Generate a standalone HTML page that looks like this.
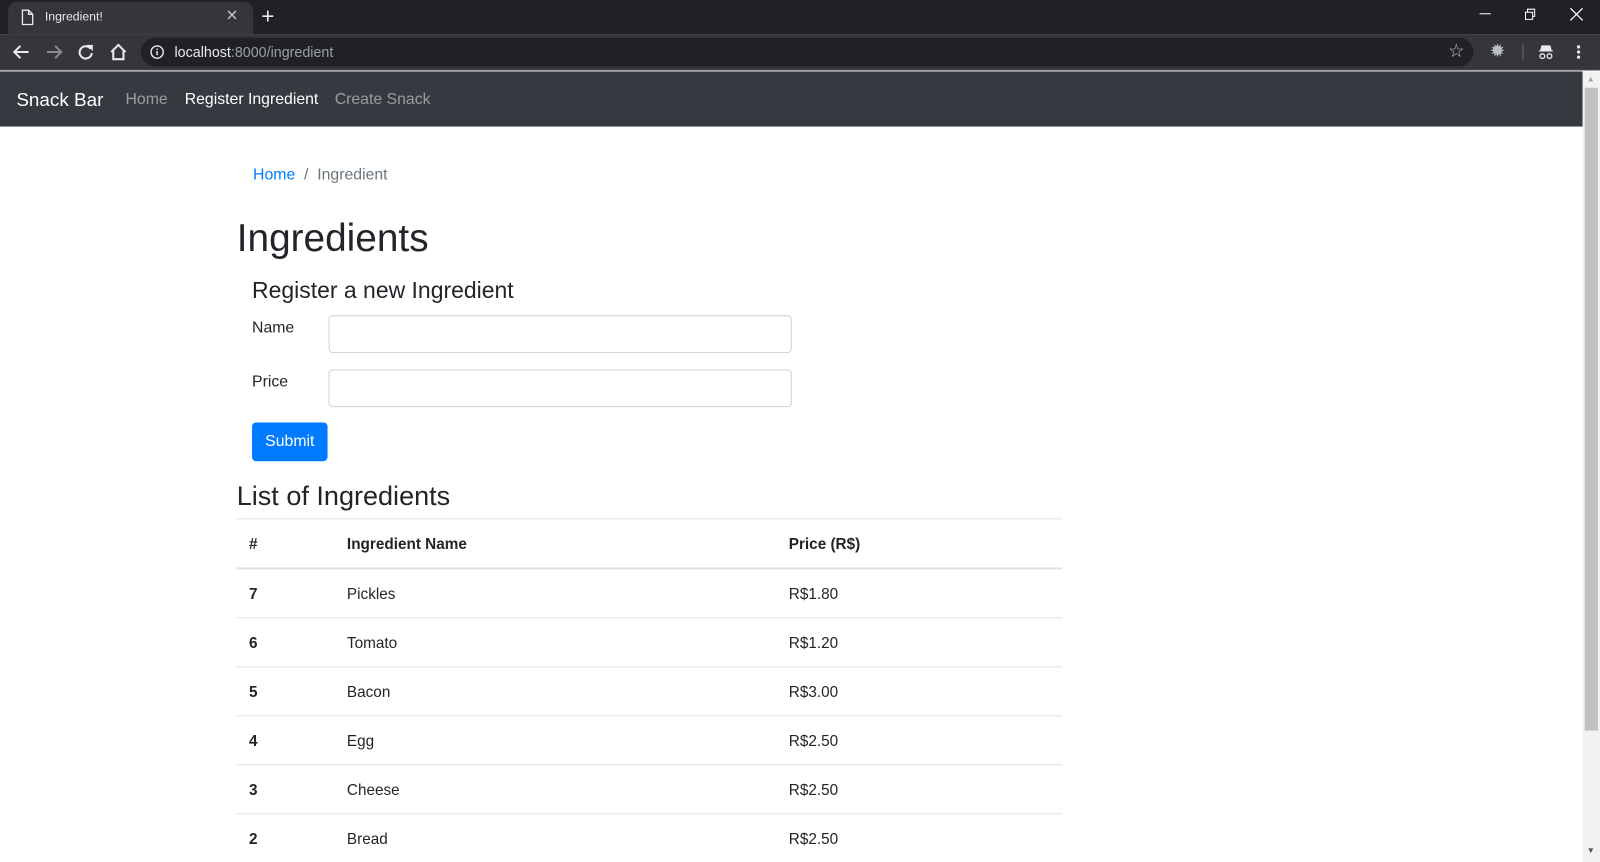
<!DOCTYPE html>
<html><head><meta charset="utf-8"><style>
*{box-sizing:border-box;margin:0;padding:0}
body{width:1600px;height:860px;overflow:hidden;background:#fff;font-family:"Liberation Sans",sans-serif;color:#212529;position:relative}
#w{position:absolute;left:0;top:0;width:1568px;height:843px;transform:scale(1.0204);transform-origin:0 0}
.a{position:absolute;white-space:nowrap}
.tabbar{left:0;top:0;width:1568px;height:34px;background:#202124}
.tab{left:8px;top:2px;width:240px;height:32px;background:#35363a;border-radius:8px 8px 0 0}
.tool{left:0;top:34px;width:1568px;height:35px;background:#35363a;border-bottom:1px solid #4a4b4f}
.url{left:138px;top:37px;width:1306px;height:28px;background:#202124;border-radius:14px}
.nav{left:0;top:70px;width:1551px;height:54px;background:#343a40}
.sb{left:1551px;top:70px;width:17px;height:775px;background:#f1f1f1}
.thumb{left:1553px;top:86px;width:13px;height:630px;background:#c1c1c1}
input{position:absolute;border:1px solid #ced4da;border-radius:4px;background:#fff}
.hr{position:absolute;left:232px;width:809px;height:1px;background:#dee2e6}
.c{font-size:15px}
</style></head><body><div id="w">
<div class="a tabbar"></div>
<div class="a tab"></div>
<svg class="a" style="left:20px;top:9px" width="14" height="16" viewBox="0 0 14 16"><path d="M2 1h6l4 4v10H2z M8 1v4h4" fill="none" stroke="#e8eaed" stroke-width="1.3"/></svg>
<div class="a" style="left:44px;top:9px;color:#e8eaed;font-size:12px">Ingredient!</div>
<div class="a" style="left:221px;top:6px;color:#bdc1c6;font-size:15px">✕</div>
<div class="a" style="left:256px;top:3px;color:#e8eaed;font-size:22px">+</div>
<div class="a" style="left:1450px;top:13px;width:11px;height:1px;background:#fff"></div>
<svg class="a" style="left:1494px;top:8px" width="12" height="12"><path d="M1 4h7v7H1z M3 4V1h7v7H8" fill="none" stroke="#fff"/></svg>
<svg class="a" style="left:1538px;top:7px" width="14" height="14"><path d="M1 1l12 12M13 1L1 13" stroke="#fff" stroke-width="1.2"/></svg>
<div class="a tool"></div>
<svg class="a" style="left:12px;top:43px" width="18" height="16"><path d="M16 8H3M8 2L2 8l6 6" fill="none" stroke="#e8eaed" stroke-width="2"/></svg>
<svg class="a" style="left:44px;top:43px" width="18" height="16"><path d="M2 8h13M10 2l6 6-6 6" fill="none" stroke="#8a8c90" stroke-width="2"/></svg>
<svg class="a" style="left:76px;top:43px" width="16" height="16"><path d="M13 5A6 6 0 1 0 14 9" fill="none" stroke="#e8eaed" stroke-width="2"/><path d="M9 1h6v6z" fill="#e8eaed"/></svg>
<svg class="a" style="left:107px;top:42px" width="18" height="18"><path d="M2 9L9 2l7 7M4 8v8h10V8" fill="none" stroke="#e8eaed" stroke-width="2"/></svg>
<div class="a url"></div>
<svg class="a" style="left:147px;top:44px" width="14" height="14"><circle cx="7" cy="7" r="6" fill="none" stroke="#e8eaed" stroke-width="1.4"/><path d="M7 6v4M7 3.5v1.2" stroke="#e8eaed" stroke-width="1.5"/></svg>
<div class="a" style="left:171px;top:43px;font-size:14px;color:#e8eaed">localhost<span style="color:#9aa0a6">:8000/ingredient</span></div>
<div class="a" style="left:1419px;top:40px;color:#bdc1c6;font-size:18px">☆</div>
<div class="a" style="left:1460px;top:40px;color:#bdc1c6;font-size:18px">✹</div>
<div class="a" style="left:1492px;top:43px;width:1px;height:16px;background:#6b6c70"></div>
<svg class="a" style="left:1507px;top:43px" width="16" height="16"><path d="M4 2h8l1 4H3z M1 7h14" stroke="#e8eaed" fill="#e8eaed"/><circle cx="4.5" cy="12" r="2.3" fill="none" stroke="#e8eaed" stroke-width="1.3"/><circle cx="11.5" cy="12" r="2.3" fill="none" stroke="#e8eaed" stroke-width="1.3"/></svg>
<svg class="a" style="left:1544px;top:43px" width="6" height="16"><circle cx="3" cy="3" r="1.6" fill="#e8eaed"/><circle cx="3" cy="8" r="1.6" fill="#e8eaed"/><circle cx="3" cy="13" r="1.6" fill="#e8eaed"/></svg>
<div class="a nav"></div>
<div class="a" style="left:16px;top:87px;font-size:18.5px;color:#fff">Snack Bar</div>
<div class="a" style="left:123px;top:89px;font-size:15.5px;color:rgba(255,255,255,.5)">Home</div>
<div class="a" style="left:181px;top:89px;font-size:15.5px;color:#fff">Register Ingredient</div>
<div class="a" style="left:328px;top:89px;font-size:15.5px;color:rgba(255,255,255,.5)">Create Snack</div>
<div class="a sb"></div><div class="a thumb"></div>
<div class="a" style="left:1555px;top:73px;color:#a3a3a3;font-size:8px">▲</div>
<div class="a" style="left:1555px;top:829px;color:#505050;font-size:8px">▼</div>
<div class="a" style="left:248px;top:163px;font-size:15.5px"><span style="color:#007bff">Home</span><span style="color:#6c757d">&nbsp; / &nbsp;Ingredient</span></div>
<div class="a" style="left:232px;top:213px;font-size:38px;font-weight:500">Ingredients</div>
<div class="a" style="left:247px;top:272px;font-size:22.5px">Register a new Ingredient</div>
<div class="a" style="left:247px;top:313px;font-size:15.5px">Name</div>
<input style="left:322px;top:309px;width:454px;height:37px">
<div class="a" style="left:247px;top:366px;font-size:15.5px">Price</div>
<input style="left:322px;top:362px;width:454px;height:37px">
<div class="a" style="left:247px;top:414px;width:74px;height:38px;background:#007bff;border-radius:4px;color:#fff;font-size:15.5px;text-align:center;line-height:38px">Submit</div>
<div class="a" style="left:232px;top:471px;font-size:26.5px;font-weight:500">List of Ingredients</div>
<div class="hr" style="top:508px"></div>
<div class="a c" style="left:244px;top:525px;font-weight:bold">#</div>
<div class="a c" style="left:340px;top:525px;font-weight:bold">Ingredient Name</div>
<div class="a c" style="left:773px;top:525px;font-weight:bold">Price (R$)</div>
<div class="hr" style="top:556px;height:2px"></div>
<div class="a c" style="left:244px;top:574px;font-weight:bold">7</div><div class="a c" style="left:340px;top:574px">Pickles</div><div class="a c" style="left:773px;top:574px">R$1.80</div>
<div class="hr" style="top:605px"></div>
<div class="a c" style="left:244px;top:622px;font-weight:bold">6</div><div class="a c" style="left:340px;top:622px">Tomato</div><div class="a c" style="left:773px;top:622px">R$1.20</div>
<div class="hr" style="top:653px"></div>
<div class="a c" style="left:244px;top:670px;font-weight:bold">5</div><div class="a c" style="left:340px;top:670px">Bacon</div><div class="a c" style="left:773px;top:670px">R$3.00</div>
<div class="hr" style="top:701px"></div>
<div class="a c" style="left:244px;top:718px;font-weight:bold">4</div><div class="a c" style="left:340px;top:718px">Egg</div><div class="a c" style="left:773px;top:718px">R$2.50</div>
<div class="hr" style="top:749px"></div>
<div class="a c" style="left:244px;top:766px;font-weight:bold">3</div><div class="a c" style="left:340px;top:766px">Cheese</div><div class="a c" style="left:773px;top:766px">R$2.50</div>
<div class="hr" style="top:797px"></div>
<div class="a c" style="left:244px;top:814px;font-weight:bold">2</div><div class="a c" style="left:340px;top:814px">Bread</div><div class="a c" style="left:773px;top:814px">R$2.50</div>
</div></body></html>
